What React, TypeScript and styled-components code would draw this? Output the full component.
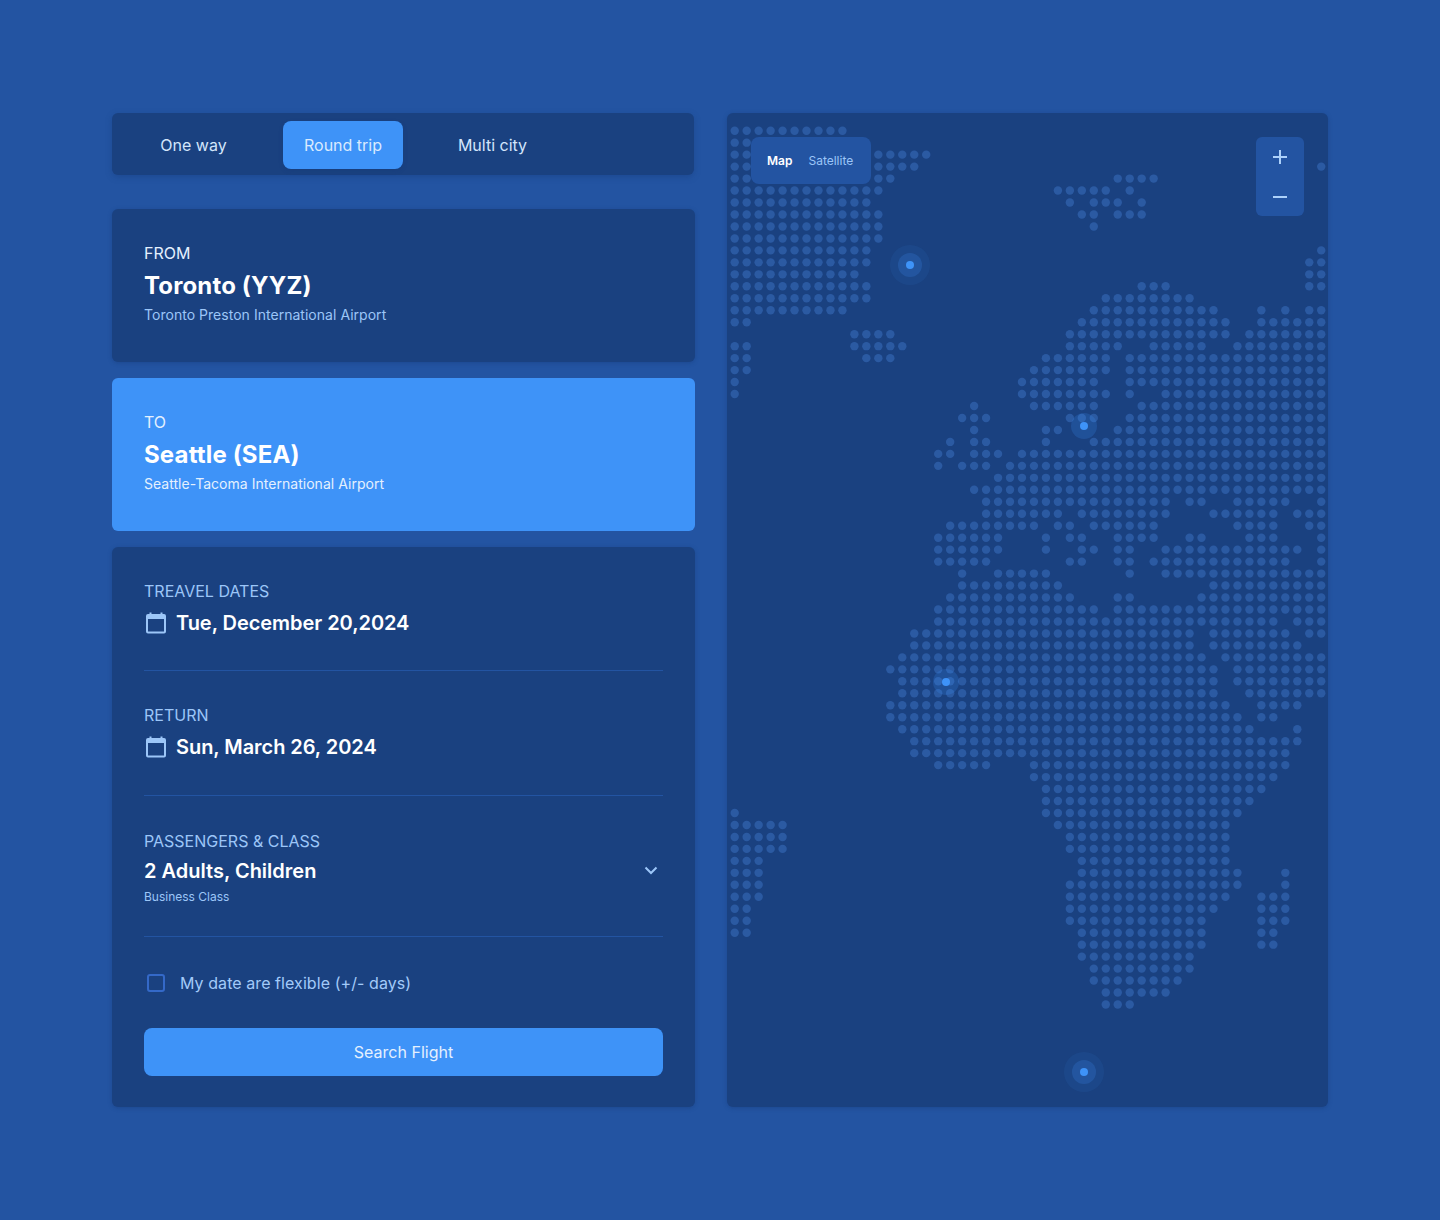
import React from 'react';
import styled, { createGlobalStyle } from 'styled-components';

const GlobalStyle = createGlobalStyle`
    * {
        box-sizing: border-box;
    }
    html,
    body {
        margin: 0;
        background: #2354a2;
    }
`;

const Page = styled.div`
    width: 1440px;
    height: 1220px;
    padding: 113px 112px 0;
    display: grid;
    grid-template-columns: 583px 601px;
    column-gap: 32px;
    align-items: start;
    font-family: Inter, 'Liberation Sans', sans-serif;
    color: #ffffff;
    background: #2354a2;
`;

const LeftColumn = styled.div`
    display: flex;
    flex-direction: column;
`;

const TabBar = styled.div`
    height: 62px;
    margin: 0 1px 34px 0;
    padding: 8px;
    display: flex;
    align-items: flex-start;
    gap: 16px;
    border-radius: 6px;
    background: #1a4180;
    box-shadow: 0 2px 6px rgba(20, 55, 115, 0.35);
`;

const Tab = styled.div<{ $active?: boolean }>`
    flex: none;
    height: 48px;
    width: ${(p) => (p.$active ? '120px' : '147px')};
    display: flex;
    align-items: center;
    justify-content: center;
    font-size: 16px;
    border-radius: 8px;
    color: ${(p) => (p.$active ? '#d9eafe' : '#d3e5fb')};
    background: ${(p) => (p.$active ? '#3e93f8' : 'transparent')};
    box-shadow: ${(p) => (p.$active ? '0 2px 4px rgba(20, 55, 115, 0.3)' : 'none')};
`;

const Card = styled.section<{ $accent?: boolean }>`
    height: 153px;
    margin-bottom: 16px;
    padding: 32px;
    border-radius: 6px;
    background: ${(p) => (p.$accent ? '#3e93f8' : '#1a4180')};
    box-shadow: ${(p) => (p.$accent ? 'none' : '0 1px 4px rgba(20, 55, 115, 0.4)')};
`;

const CardLabel = styled.div`
    font-size: 16px;
    line-height: 24px;
    color: #e4f0fe;
`;

const CardTitle = styled.div`
    margin-top: 5px;
    font-size: 24px;
    line-height: 32px;
    font-weight: 700;
    letter-spacing: 0.15px;
`;

const CardSub = styled.div<{ $accent?: boolean }>`
    margin-top: 3px;
    font-size: 14px;
    line-height: 20px;
    letter-spacing: 0.03px;
    color: ${(p) => (p.$accent ? '#e4f0fe' : '#9cc6f8')};
`;

const FormCard = styled.section`
    height: 560px;
    padding: 32px;
    border-radius: 6px;
    background: #1a4180;
    box-shadow: 0 1px 4px rgba(20, 55, 115, 0.4);
`;

const Field = styled.div<{ $pad: number; $gap: number }>`
    position: relative;
    padding-bottom: ${(p) => p.$pad}px;
    margin-bottom: ${(p) => p.$gap}px;
    border-bottom: 1px solid #2354a2;
`;

const FieldLabel = styled.div`
    font-size: 16px;
    line-height: 24px;
    color: #9cc6f8;
`;

const DateRow = styled.div`
    margin-top: 6px;
    display: flex;
    align-items: center;
    gap: 8px;
    font-size: 20px;
    line-height: 28px;
    font-weight: 600;
    letter-spacing: -0.05px;
`;

const ClassValue = styled.div`
    margin-top: 4px;
    font-size: 20px;
    line-height: 28px;
    font-weight: 600;
`;

const ClassSub = styled.div`
    margin-top: 2px;
    font-size: 12px;
    line-height: 20px;
    color: #9cc6f8;
`;

const Chevron = styled.svg`
    position: absolute;
    right: 0;
    top: 29px;
    width: 24px;
    height: 24px;
    fill: none;
    stroke: #9cc6f8;
    stroke-width: 2;
`;

const CheckRow = styled.label`
    height: 24px;
    display: flex;
    align-items: center;
    gap: 12px;
    font-size: 16px;
    letter-spacing: 0.07px;
    color: #a2caf9;
`;

const CheckHolder = styled.span`
    width: 24px;
    height: 24px;
    display: flex;
    align-items: center;
    justify-content: center;
`;

const CheckBox = styled.span`
    width: 18px;
    height: 18px;
    border: 2px solid #3469c8;
    border-radius: 3px;
`;

const SearchButton = styled.button`
    width: 100%;
    height: 48px;
    margin-top: 33px;
    border: none;
    border-radius: 8px;
    font-family: inherit;
    font-size: 16px;
    color: #e4f0fe;
    background: #3e93f8;
`;

const MapPanel = styled.section`
    position: relative;
    height: 994px;
    border-radius: 6px;
    overflow: hidden;
    background: #1a4180;
    box-shadow: 0 1px 4px rgba(20, 55, 115, 0.4);
`;

const MapArt = styled.svg`
    display: block;
    filter: blur(0.5px);
`;

const MapSwitch = styled.div`
    position: absolute;
    left: 24px;
    top: 24px;
    width: 120px;
    height: 47px;
    padding: 0 16px;
    display: flex;
    align-items: center;
    gap: 16px;
    font-size: 12px;
    border-radius: 8px;
    background: #2354a2;
`;

const MapOption = styled.span<{ $active?: boolean }>`
    font-weight: ${(p) => (p.$active ? 600 : 400)};
    color: ${(p) => (p.$active ? '#ffffff' : '#9cc6f8')};
`;

const ZoomBox = styled.div`
    position: absolute;
    right: 24px;
    top: 24px;
    width: 48px;
    height: 79px;
    padding: 0 9px;
    display: flex;
    flex-direction: column;
    align-items: center;
    justify-content: center;
    gap: 16px;
    border-radius: 6px;
    background: #2354a2;
`;

const ZoomIcon = styled.svg`
    width: 24px;
    height: 24px;
    stroke: #acd1fa;
    stroke-width: 2;
    fill: none;
`;

// dot rows of the world map, one entry per row: column ranges on a 12px grid
const MAP_ROWS: string[] = [
    '0-9',
    '0-1',
    '0-1 12-16',
    '0-1 12-15 49',
    '0-1 12-13 32-35',
    '0-12 27-31 33',
    '0-11 28 30-32 34',
    '0-12 29-30 32-34',
    '0-12 30',
    '0-12',
    '0-11 49',
    '0-11 48-49',
    '0-10 48-49',
    '0-11 34-36 48-49',
    '0-11 31-38',
    '0-9 30-40 44 46 48-49',
    '0-1 29-41 44-49',
    '10-13 28-41 43-49',
    '0-1 10-14 28-32 35-39 42-49',
    '0-1 11-13 26-31 33-49',
    '0-1 25-31 33-49',
    '0 24-30 33-49',
    '0 24-31 33 36-49',
    '20 25-30 34-49',
    '19-21 28-30 33-49',
    '20 26-27 32-49',
    '18 20-21 26 30-49',
    '17-18 20-22 24-49',
    '17 19-21 23-49',
    '22-49',
    '20-49',
    '21-36 38-39 42-46 49',
    '21-27 29-36 40-45 47-49',
    '18-25 27-28 30-35 42-45 48-49',
    '17-22 26 28-29 32-35 38-39 43-45 49',
    '17-22 26 29-30 32-33 36-47 49',
    '17-21 28-29 32-33 35-46 49',
    '19 22-26 33 36-49',
    '19-27 40-49',
    '18-28 32-33 39-49',
    '17-30 32-49',
    '17-45 47-49',
    '15-38 40-46 48-49',
    '15-38 40-47',
    '14-39 41-49',
    '13-40 42-49',
    '14-40 42-49',
    '14-40 43-49',
    '13-41 44-47',
    '13-42 44-45',
    '14-43 47',
    '15-47',
    '15-46',
    '17-21 25-46',
    '25-45',
    '26-44',
    '26-43',
    '0 26-42',
    '0-4 27-41',
    '0-4 28-41',
    '0-4 28-41',
    '0-2 29-41',
    '0-2 29-42 46',
    '0-2 28-42 46',
    '0-2 28-41 44-46',
    '0-1 28-40 44-46',
    '0-1 28-39 44-46',
    '0-1 29-39 44-45',
    '29-39 44-45',
    '29-38',
    '30-38',
    '30-37',
    '31-36',
    '31-33'
];

const MAP_DOTS = MAP_ROWS.flatMap((row, r) =>
    row.split(' ').flatMap((range) => {
        const [from, to] = range.split('-').map(Number);
        const cols: [number, number][] = [];
        for (let c = from; c <= (to ?? from); c++) cols.push([c, r]);
        return cols;
    })
);

const MARKERS = [
    { x: 183, y: 152, halo: true },
    { x: 357, y: 313, halo: false },
    { x: 219, y: 569, halo: false },
    { x: 357, y: 959, halo: true }
];

const CalendarIcon = () => (
    <svg width="24" height="24" viewBox="0 0 24 24" fill="none" stroke="#9cc6f8" strokeWidth="2">
        <rect x="3" y="4" width="18" height="17.5" rx="1" />
        <path d="M3 6.5h18" strokeWidth="3" />
        <path d="M6.5 1.5v3M17.5 1.5v3" />
    </svg>
);

const WorldMap = () => (
    <MapArt width="601" height="994" viewBox="0 0 601 994">
        {MAP_DOTS.map(([c, r]) => (
            <circle key={`${c}-${r}`} cx={7.7 + c * 11.97} cy={17.7 + r * 11.97} r="4.2" fill="#2b5aa2" />
        ))}
        {MARKERS.map((m) => (
            <g key={m.x + '-' + m.y}>
                {m.halo && <circle cx={m.x} cy={m.y} r="20" fill="#3e93f8" opacity="0.08" />}
                <circle cx={m.x} cy={m.y} r={m.halo ? 12 : 13} fill="#3e93f8" opacity="0.2" />
                <circle cx={m.x} cy={m.y} r="4" fill="#3e93f8" />
            </g>
        ))}
    </MapArt>
);

const App: React.FC = () => (
    <Page>
        <GlobalStyle />
        <LeftColumn>
            <TabBar>
                <Tab>One way</Tab>
                <Tab $active>Round trip</Tab>
                <Tab>Multi city</Tab>
            </TabBar>
            <Card>
                <CardLabel>FROM</CardLabel>
                <CardTitle>Toronto (YYZ)</CardTitle>
                <CardSub>Toronto Preston International Airport</CardSub>
            </Card>
            <Card $accent>
                <CardLabel>TO</CardLabel>
                <CardTitle>Seattle (SEA)</CardTitle>
                <CardSub $accent>Seattle-Tacoma International Airport</CardSub>
            </Card>
            <FormCard>
                <Field $pad={33} $gap={32}>
                    <FieldLabel>TREAVEL DATES</FieldLabel>
                    <DateRow>
                        <CalendarIcon />
                        Tue, December 20,2024
                    </DateRow>
                </Field>
                <Field $pad={34} $gap={33}>
                    <FieldLabel>RETURN</FieldLabel>
                    <DateRow>
                        <CalendarIcon />
                        Sun, March 26, 2024
                    </DateRow>
                </Field>
                <Field $pad={29} $gap={34}>
                    <FieldLabel>PASSENGERS &amp; CLASS</FieldLabel>
                    <ClassValue>2 Adults, Children</ClassValue>
                    <ClassSub>Business Class</ClassSub>
                    <Chevron viewBox="0 0 24 24">
                        <path d="M6.5 9.5l5.5 5.5 5.5-5.5" />
                    </Chevron>
                </Field>
                <CheckRow>
                    <CheckHolder>
                        <CheckBox />
                    </CheckHolder>
                    My date are flexible (+/- days)
                </CheckRow>
                <SearchButton>Search Flight</SearchButton>
            </FormCard>
        </LeftColumn>
        <MapPanel>
            <WorldMap />
            <MapSwitch>
                <MapOption $active>Map</MapOption>
                <MapOption>Satellite</MapOption>
            </MapSwitch>
            <ZoomBox>
                <ZoomIcon viewBox="0 0 24 24">
                    <path d="M12 5v14M5 12h14" />
                </ZoomIcon>
                <ZoomIcon viewBox="0 0 24 24">
                    <path d="M5 12h14" />
                </ZoomIcon>
            </ZoomBox>
        </MapPanel>
    </Page>
);

export default App;
